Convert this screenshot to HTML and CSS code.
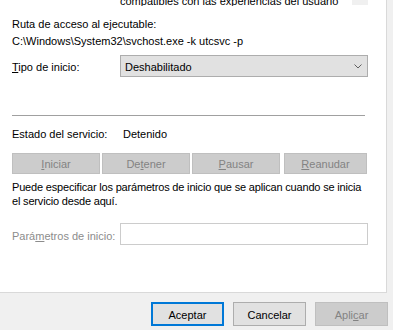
FILE: index.html
```html
<!DOCTYPE html>

<html>
    <head>
        <meta charset="utf-8">

        <link rel="stylesheet" href="styles.css">
    </head>

    <body>
        <div class="panel">
            <div class="desc">
                <div class="desc-text">compatibles con las experiencias del usuario</div>
                <div class="thumb"></div>
            </div>

            <div class="line first">Ruta de acceso al ejecutable:</div>
            <div class="line path">C:\Windows\System32\svchost.exe -k utcsvc -p</div>

            <div class="row startup">
                <div class="label"><u>T</u>ipo de inicio:</div>
                <div class="select">
                    <span>Deshabilitado</span>
                    <svg width="8" height="5" viewBox="0 0 8 5">
                        <path d="M0.5 0.5 L4 4 L7.5 0.5" fill="none" stroke="#606060" stroke-width="1"/>
                    </svg>
                </div>
            </div>

            <div class="sep"></div>

            <div class="row status">
                <div class="label">Estado del servicio:</div>
                <div>Detenido</div>
            </div>

            <div class="buttons">
                <button class="btn off"><u>I</u>niciar</button>
                <button class="btn off">De<u>t</u>ener</button>
                <button class="btn off"><u>P</u>ausar</button>
                <button class="btn off last"><u>R</u>eanudar</button>
            </div>

            <div class="note">
                Puede especificar los parámetros de inicio que se aplican cuando se inicia<br>
                el servicio desde aquí.
            </div>

            <div class="row params">
                <div class="label grey">Pará<u>m</u>etros de inicio:</div>
                <div class="textbox"></div>
            </div>
        </div>

        <div class="footer">
            <button class="btn dlg default">Aceptar</button>
            <button class="btn dlg">Cancelar</button>
            <button class="btn dlg off">Apli<u>c</u>ar</button>
        </div>
    </body>
</html>
```

FILE: styles.css
```css
body
{
    margin: 0;
    background: #f0f0f0;
    font-family: "Liberation Sans", Arial, sans-serif;
    font-size: 11px;
    line-height: 14px;
    color: #000000;
}

.panel
{
    width: 387px;
    height: 293px;
    padding-left: 12px;
    box-sizing: border-box;
    background: #ffffff;
    border-right: 1px solid #d9d9d9;
    border-bottom: 1px solid #d9d9d9;
}

.desc
{
    display: flex;
    height: 6px;
    width: 356px;
    overflow: hidden;
}

.desc-text
{
    flex: 1;
    margin-top: -6px;
    padding-left: 108px;
    white-space: nowrap;
}

.thumb
{
    width: 16px;
    height: 5px;
    background: #f0f0f0;
}

.line
{
    white-space: nowrap;
}

.first
{
    margin-top: 11px;
}

.path
{
    margin-top: 3px;
}

.row
{
    display: flex;
    align-items: center;
}

.label
{
    width: 108px;
    flex: none;
}

.grey
{
    color: #8c8c8c;
}

.startup
{
    margin-top: 7px;
}

.startup .label
{
    padding-top: 2px;
}

.select
{
    width: 248px;
    height: 22px;
    box-sizing: border-box;
    background: #e1e1e1;
    border: 1px solid #adadad;
    display: flex;
    align-items: center;
    justify-content: space-between;
    padding: 2px 5px 0 4px;
}

.select svg
{
    margin-top: -2px;
}

.sep
{
    width: 353px;
    height: 1px;
    background: #a0a0a0;
    margin-top: 38px;
}

.status
{
    margin-top: 11px;
}

.status .label
{
    width: 111px;
}

.buttons
{
    display: flex;
    gap: 2px;
    margin-top: 12px;
}

.btn
{
    font-family: "Liberation Sans", Arial, sans-serif;
    font-size: 11px;
    height: 21px;
    width: 88px;
    padding: 0;
    padding-top: 1px;
    background: #e1e1e1;
    border: 1px solid #adadad;
    color: #000000;
    margin: 0;
}

.btn.last
{
    width: 83px;
    margin-left: 2px;
}

.btn.off
{
    background: #cccccc;
    border-color: #bfbfbf;
    color: #838383;
}

.note
{
    margin-top: 6px;
    letter-spacing: -0.18px;
}

.params
{
    margin-top: 15px;
}

.params .label
{
    padding-top: 3px;
}

.textbox
{
    width: 248px;
    height: 22px;
    box-sizing: border-box;
    border: 1px solid #cccccc;
}

.footer
{
    display: flex;
    justify-content: flex-end;
    gap: 9px;
    padding-top: 9px;
    padding-right: 5px;
}

.btn.dlg
{
    width: 73px;
    height: 24px;
}

.btn.default
{
    border: 2px solid #0078d7;
}
```
